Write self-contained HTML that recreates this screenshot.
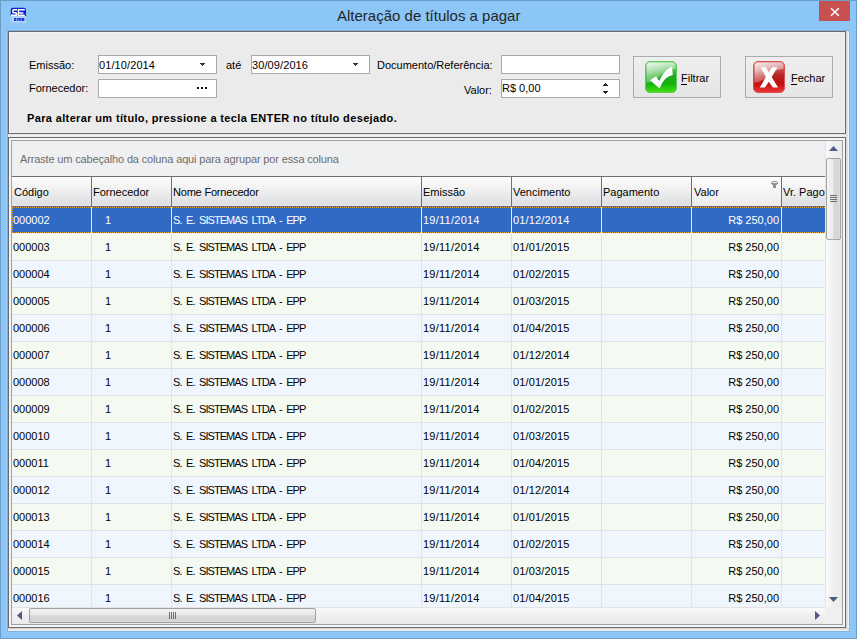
<!DOCTYPE html>
<html><head><meta charset="utf-8">
<style>
*{margin:0;padding:0;box-sizing:border-box}
html,body{width:857px;height:639px;overflow:hidden}
body{position:relative;background:#8cc6f7;font-family:"Liberation Sans",sans-serif;font-size:11px;color:#000}
.a{position:absolute}
.t{position:absolute;white-space:nowrap;line-height:13px}
#edge{left:0;top:0;width:857px;height:639px;border:1px solid #6c9dc6}
#close{left:819px;top:1px;width:31px;height:20px;background:#c75050}
#title{left:337px;top:7px;font-size:15px;line-height:18px;color:#262626}
#client{left:8px;top:31px;width:841px;height:600px;background:#ececec}
#rstrip{left:846px;top:31px;width:3px;height:600px;background:linear-gradient(90deg,#d9d9d9 0 1px,#e2e2e2 1px 2px,#f6f4f2 2px)}
#bstrip{left:8px;top:628px;width:841px;height:3px;background:linear-gradient(180deg,#d9d9d9 0 1px,#e2e2e2 1px 2px,#f6f4f2 2px)}
#panel{left:8px;top:31px;width:838px;height:103px;background:#ebebeb;border:1px solid #6a6a6a;}
#panel:after{content:"";position:absolute;left:0;top:0;right:0;bottom:0;border:1px solid #f1f1f1}
.box{position:absolute;background:#fff;border:1px solid #a9a9a9;height:19px}
.btn{position:absolute;width:88px;height:42px;border:1px solid #acacac;background:linear-gradient(180deg,#efefef,#e5e5e5)}
#gframe{left:8px;top:137px;width:838px;height:491px;border:1px solid #6a6a6a;background:#f6f6f6}
#gin{left:11px;top:140px;width:832px;height:485px;border:1px solid #a0a0a0;background:#f0f0f2}
#group{left:12px;top:141px;width:814px;height:36px;background:#eff0f2;border-bottom:1px solid #6f6f6f}
#hdr{left:12px;top:177px;width:814px;height:30px;background:linear-gradient(180deg,#fefefe 0%,#f1f1f2 40%,#dfe0e3 93%,#e8e8ea 96%,#e8e8ea 100%);border-bottom:1px solid #6a6a6a}
.hs{position:absolute;top:177px;width:1px;height:30px;background:#6f6f6f}
.row{position:absolute;left:12px;width:814px;height:27px;border-bottom:1px solid #e2e2e2}
.vs{position:absolute;width:1px;background:#e2e2e2}
.g{letter-spacing:-0.95px;word-spacing:2.4px}
.focus{background-image:linear-gradient(90deg,#e8a33a 50%,transparent 50%),linear-gradient(90deg,#e8a33a 50%,transparent 50%),linear-gradient(0deg,#e8a33a 50%,transparent 50%);background-size:2px 1px,2px 1px,1px 2px;background-position:0 0,0 100%,0 0;background-repeat:repeat-x,repeat-x,repeat-y}
</style></head><body>
<div class="a" id="edge"></div>
<div class="a" id="close"></div>
<div class="t" id="title">Alteração de títulos a pagar</div>
<div class="a" style="left:6px;top:29px;width:845px;height:604px;background:#8fc9fb"></div>
<div class="a" style="left:7px;top:30px;width:843px;height:602px;background:#7cb2e2"></div>
<div class="a" id="client"></div>
<div class="a" id="rstrip"></div>
<div class="a" id="bstrip"></div>
<div class="a" id="panel"></div>
<div class="t" style="left:29px;top:59px">Emissão:</div>
<div class="box" style="left:98px;top:55px;width:119px"></div>
<div class="t" style="left:99px;top:59px;letter-spacing:0.1px">01/10/2014</div>
<div class="t" style="left:226px;top:59px">até</div>
<div class="box" style="left:251px;top:55px;width:119px"></div>
<div class="t" style="left:252px;top:59px;letter-spacing:0.1px">30/09/2016</div>
<div class="t" style="left:377px;top:59px">Documento/Referência:</div>
<div class="box" style="left:501px;top:55px;width:119px"></div>
<div class="t" style="left:29px;top:82px">Fornecedor:</div>
<div class="box" style="left:98px;top:79px;width:119px"></div>
<div class="t" style="left:464px;top:84px">Valor:</div>
<div class="box" style="left:501px;top:79px;width:119px"></div>
<div class="t" style="left:502px;top:82px">R$ 0,00</div>
<div class="btn" style="left:633px;top:56px"></div>
<div class="t" style="left:681px;top:72px">Filtrar</div>
<div class="btn" style="left:745px;top:56px"></div>
<div class="t" style="left:791px;top:72px">Fechar</div>
<div class="t" style="left:27px;top:112px;font-weight:bold;letter-spacing:0.36px">Para alterar um título, pressione a tecla ENTER no título desejado.</div>

<div class="a" id="gframe"></div>
<div class="a" id="gin"></div>
<div class="a" id="group"></div>
<div class="t" style="left:20px;top:153px;color:#6d6d6d;letter-spacing:-0.15px">Arraste um cabeçalho da coluna aqui para agrupar por essa coluna</div>
<div class="a" id="hdr"></div>
<div class="a" style="left:692px;top:177px;width:89px;height:29px;background:linear-gradient(180deg,#fefefe 0%,#f6f6f6 45%,#ececed 90%,#efeff0 100%)"></div>
<div class="hs" style="left:91px"></div><div class="hs" style="left:171px"></div><div class="hs" style="left:421px"></div><div class="hs" style="left:511px"></div><div class="hs" style="left:601px"></div><div class="hs" style="left:691px"></div><div class="hs" style="left:781px"></div>
<div class="t" style="left:14px;top:186px">Código</div>
<div class="t" style="left:93px;top:186px">Fornecedor</div>
<div class="t" style="left:173px;top:186px;letter-spacing:-0.2px">Nome Fornecedor</div>
<div class="t" style="left:423px;top:186px">Emissão</div>
<div class="t" style="left:513px;top:186px">Vencimento</div>
<div class="t" style="left:603px;top:186px">Pagamento</div>
<div class="t" style="left:694px;top:186px">Valor</div>
<div class="t" style="left:783px;top:186px">Vr. Pago</div>
<div class="a" style="left:12px;top:207px;width:814px;height:26px;background:#316ac5"></div>
<div class="a" style="left:12px;top:233px;width:814px;height:1px;background:#eef2f6"></div>
<div class="a" style="left:91px;top:207px;width:1px;height:27px;background:#e4e8f0"></div>
<div class="a" style="left:171px;top:207px;width:1px;height:27px;background:#e4e8f0"></div>
<div class="a" style="left:421px;top:207px;width:1px;height:27px;background:#e4e8f0"></div>
<div class="a" style="left:511px;top:207px;width:1px;height:27px;background:#e4e8f0"></div>
<div class="a" style="left:601px;top:207px;width:1px;height:27px;background:#e4e8f0"></div>
<div class="a" style="left:691px;top:207px;width:1px;height:27px;background:#e4e8f0"></div>
<div class="a" style="left:781px;top:207px;width:1px;height:27px;background:#e4e8f0"></div>
<div class="t" style="left:13px;top:214px;color:#fff">000002</div>
<div class="t" style="left:105px;top:214px;color:#fff">1</div>
<div class="t g" style="left:173px;top:214px;color:#fff">S. E. SISTEMAS LTDA - EPP</div>
<div class="t" style="left:423px;top:214px;color:#fff;letter-spacing:0.25px">19/11/2014</div>
<div class="t" style="left:513px;top:214px;color:#fff;letter-spacing:0.15px">01/12/2014</div>
<div class="t" style="right:78px;top:214px;color:#fff">R$ 250,00</div>
<div class="a focus" style="left:12px;top:207px;width:814px;height:26px"></div>
<div class="a" style="left:12px;top:234px;width:814px;height:26px;background:#f4faf1"></div>
<div class="a" style="left:12px;top:260px;width:814px;height:1px;background:#e2e2e2"></div>
<div class="a" style="left:91px;top:234px;width:1px;height:27px;background:#e2e2e2"></div>
<div class="a" style="left:171px;top:234px;width:1px;height:27px;background:#e2e2e2"></div>
<div class="a" style="left:421px;top:234px;width:1px;height:27px;background:#e2e2e2"></div>
<div class="a" style="left:511px;top:234px;width:1px;height:27px;background:#e2e2e2"></div>
<div class="a" style="left:601px;top:234px;width:1px;height:27px;background:#e2e2e2"></div>
<div class="a" style="left:691px;top:234px;width:1px;height:27px;background:#e2e2e2"></div>
<div class="a" style="left:781px;top:234px;width:1px;height:27px;background:#e2e2e2"></div>
<div class="t" style="left:13px;top:241px;color:#000">000003</div>
<div class="t" style="left:105px;top:241px;color:#000">1</div>
<div class="t g" style="left:173px;top:241px;color:#000">S. E. SISTEMAS LTDA - EPP</div>
<div class="t" style="left:423px;top:241px;color:#000;letter-spacing:0.25px">19/11/2014</div>
<div class="t" style="left:513px;top:241px;color:#000;letter-spacing:0.15px">01/01/2015</div>
<div class="t" style="right:78px;top:241px;color:#000">R$ 250,00</div>
<div class="a" style="left:12px;top:261px;width:814px;height:26px;background:#f0f6fe"></div>
<div class="a" style="left:12px;top:287px;width:814px;height:1px;background:#e2e2e2"></div>
<div class="a" style="left:91px;top:261px;width:1px;height:27px;background:#e2e2e2"></div>
<div class="a" style="left:171px;top:261px;width:1px;height:27px;background:#e2e2e2"></div>
<div class="a" style="left:421px;top:261px;width:1px;height:27px;background:#e2e2e2"></div>
<div class="a" style="left:511px;top:261px;width:1px;height:27px;background:#e2e2e2"></div>
<div class="a" style="left:601px;top:261px;width:1px;height:27px;background:#e2e2e2"></div>
<div class="a" style="left:691px;top:261px;width:1px;height:27px;background:#e2e2e2"></div>
<div class="a" style="left:781px;top:261px;width:1px;height:27px;background:#e2e2e2"></div>
<div class="t" style="left:13px;top:268px;color:#000">000004</div>
<div class="t" style="left:105px;top:268px;color:#000">1</div>
<div class="t g" style="left:173px;top:268px;color:#000">S. E. SISTEMAS LTDA - EPP</div>
<div class="t" style="left:423px;top:268px;color:#000;letter-spacing:0.25px">19/11/2014</div>
<div class="t" style="left:513px;top:268px;color:#000;letter-spacing:0.15px">01/02/2015</div>
<div class="t" style="right:78px;top:268px;color:#000">R$ 250,00</div>
<div class="a" style="left:12px;top:288px;width:814px;height:26px;background:#f4faf1"></div>
<div class="a" style="left:12px;top:314px;width:814px;height:1px;background:#e2e2e2"></div>
<div class="a" style="left:91px;top:288px;width:1px;height:27px;background:#e2e2e2"></div>
<div class="a" style="left:171px;top:288px;width:1px;height:27px;background:#e2e2e2"></div>
<div class="a" style="left:421px;top:288px;width:1px;height:27px;background:#e2e2e2"></div>
<div class="a" style="left:511px;top:288px;width:1px;height:27px;background:#e2e2e2"></div>
<div class="a" style="left:601px;top:288px;width:1px;height:27px;background:#e2e2e2"></div>
<div class="a" style="left:691px;top:288px;width:1px;height:27px;background:#e2e2e2"></div>
<div class="a" style="left:781px;top:288px;width:1px;height:27px;background:#e2e2e2"></div>
<div class="t" style="left:13px;top:295px;color:#000">000005</div>
<div class="t" style="left:105px;top:295px;color:#000">1</div>
<div class="t g" style="left:173px;top:295px;color:#000">S. E. SISTEMAS LTDA - EPP</div>
<div class="t" style="left:423px;top:295px;color:#000;letter-spacing:0.25px">19/11/2014</div>
<div class="t" style="left:513px;top:295px;color:#000;letter-spacing:0.15px">01/03/2015</div>
<div class="t" style="right:78px;top:295px;color:#000">R$ 250,00</div>
<div class="a" style="left:12px;top:315px;width:814px;height:26px;background:#f0f6fe"></div>
<div class="a" style="left:12px;top:341px;width:814px;height:1px;background:#e2e2e2"></div>
<div class="a" style="left:91px;top:315px;width:1px;height:27px;background:#e2e2e2"></div>
<div class="a" style="left:171px;top:315px;width:1px;height:27px;background:#e2e2e2"></div>
<div class="a" style="left:421px;top:315px;width:1px;height:27px;background:#e2e2e2"></div>
<div class="a" style="left:511px;top:315px;width:1px;height:27px;background:#e2e2e2"></div>
<div class="a" style="left:601px;top:315px;width:1px;height:27px;background:#e2e2e2"></div>
<div class="a" style="left:691px;top:315px;width:1px;height:27px;background:#e2e2e2"></div>
<div class="a" style="left:781px;top:315px;width:1px;height:27px;background:#e2e2e2"></div>
<div class="t" style="left:13px;top:322px;color:#000">000006</div>
<div class="t" style="left:105px;top:322px;color:#000">1</div>
<div class="t g" style="left:173px;top:322px;color:#000">S. E. SISTEMAS LTDA - EPP</div>
<div class="t" style="left:423px;top:322px;color:#000;letter-spacing:0.25px">19/11/2014</div>
<div class="t" style="left:513px;top:322px;color:#000;letter-spacing:0.15px">01/04/2015</div>
<div class="t" style="right:78px;top:322px;color:#000">R$ 250,00</div>
<div class="a" style="left:12px;top:342px;width:814px;height:26px;background:#f4faf1"></div>
<div class="a" style="left:12px;top:368px;width:814px;height:1px;background:#e2e2e2"></div>
<div class="a" style="left:91px;top:342px;width:1px;height:27px;background:#e2e2e2"></div>
<div class="a" style="left:171px;top:342px;width:1px;height:27px;background:#e2e2e2"></div>
<div class="a" style="left:421px;top:342px;width:1px;height:27px;background:#e2e2e2"></div>
<div class="a" style="left:511px;top:342px;width:1px;height:27px;background:#e2e2e2"></div>
<div class="a" style="left:601px;top:342px;width:1px;height:27px;background:#e2e2e2"></div>
<div class="a" style="left:691px;top:342px;width:1px;height:27px;background:#e2e2e2"></div>
<div class="a" style="left:781px;top:342px;width:1px;height:27px;background:#e2e2e2"></div>
<div class="t" style="left:13px;top:349px;color:#000">000007</div>
<div class="t" style="left:105px;top:349px;color:#000">1</div>
<div class="t g" style="left:173px;top:349px;color:#000">S. E. SISTEMAS LTDA - EPP</div>
<div class="t" style="left:423px;top:349px;color:#000;letter-spacing:0.25px">19/11/2014</div>
<div class="t" style="left:513px;top:349px;color:#000;letter-spacing:0.15px">01/12/2014</div>
<div class="t" style="right:78px;top:349px;color:#000">R$ 250,00</div>
<div class="a" style="left:12px;top:369px;width:814px;height:26px;background:#f0f6fe"></div>
<div class="a" style="left:12px;top:395px;width:814px;height:1px;background:#e2e2e2"></div>
<div class="a" style="left:91px;top:369px;width:1px;height:27px;background:#e2e2e2"></div>
<div class="a" style="left:171px;top:369px;width:1px;height:27px;background:#e2e2e2"></div>
<div class="a" style="left:421px;top:369px;width:1px;height:27px;background:#e2e2e2"></div>
<div class="a" style="left:511px;top:369px;width:1px;height:27px;background:#e2e2e2"></div>
<div class="a" style="left:601px;top:369px;width:1px;height:27px;background:#e2e2e2"></div>
<div class="a" style="left:691px;top:369px;width:1px;height:27px;background:#e2e2e2"></div>
<div class="a" style="left:781px;top:369px;width:1px;height:27px;background:#e2e2e2"></div>
<div class="t" style="left:13px;top:376px;color:#000">000008</div>
<div class="t" style="left:105px;top:376px;color:#000">1</div>
<div class="t g" style="left:173px;top:376px;color:#000">S. E. SISTEMAS LTDA - EPP</div>
<div class="t" style="left:423px;top:376px;color:#000;letter-spacing:0.25px">19/11/2014</div>
<div class="t" style="left:513px;top:376px;color:#000;letter-spacing:0.15px">01/01/2015</div>
<div class="t" style="right:78px;top:376px;color:#000">R$ 250,00</div>
<div class="a" style="left:12px;top:396px;width:814px;height:26px;background:#f4faf1"></div>
<div class="a" style="left:12px;top:422px;width:814px;height:1px;background:#e2e2e2"></div>
<div class="a" style="left:91px;top:396px;width:1px;height:27px;background:#e2e2e2"></div>
<div class="a" style="left:171px;top:396px;width:1px;height:27px;background:#e2e2e2"></div>
<div class="a" style="left:421px;top:396px;width:1px;height:27px;background:#e2e2e2"></div>
<div class="a" style="left:511px;top:396px;width:1px;height:27px;background:#e2e2e2"></div>
<div class="a" style="left:601px;top:396px;width:1px;height:27px;background:#e2e2e2"></div>
<div class="a" style="left:691px;top:396px;width:1px;height:27px;background:#e2e2e2"></div>
<div class="a" style="left:781px;top:396px;width:1px;height:27px;background:#e2e2e2"></div>
<div class="t" style="left:13px;top:403px;color:#000">000009</div>
<div class="t" style="left:105px;top:403px;color:#000">1</div>
<div class="t g" style="left:173px;top:403px;color:#000">S. E. SISTEMAS LTDA - EPP</div>
<div class="t" style="left:423px;top:403px;color:#000;letter-spacing:0.25px">19/11/2014</div>
<div class="t" style="left:513px;top:403px;color:#000;letter-spacing:0.15px">01/02/2015</div>
<div class="t" style="right:78px;top:403px;color:#000">R$ 250,00</div>
<div class="a" style="left:12px;top:423px;width:814px;height:26px;background:#f0f6fe"></div>
<div class="a" style="left:12px;top:449px;width:814px;height:1px;background:#e2e2e2"></div>
<div class="a" style="left:91px;top:423px;width:1px;height:27px;background:#e2e2e2"></div>
<div class="a" style="left:171px;top:423px;width:1px;height:27px;background:#e2e2e2"></div>
<div class="a" style="left:421px;top:423px;width:1px;height:27px;background:#e2e2e2"></div>
<div class="a" style="left:511px;top:423px;width:1px;height:27px;background:#e2e2e2"></div>
<div class="a" style="left:601px;top:423px;width:1px;height:27px;background:#e2e2e2"></div>
<div class="a" style="left:691px;top:423px;width:1px;height:27px;background:#e2e2e2"></div>
<div class="a" style="left:781px;top:423px;width:1px;height:27px;background:#e2e2e2"></div>
<div class="t" style="left:13px;top:430px;color:#000">000010</div>
<div class="t" style="left:105px;top:430px;color:#000">1</div>
<div class="t g" style="left:173px;top:430px;color:#000">S. E. SISTEMAS LTDA - EPP</div>
<div class="t" style="left:423px;top:430px;color:#000;letter-spacing:0.25px">19/11/2014</div>
<div class="t" style="left:513px;top:430px;color:#000;letter-spacing:0.15px">01/03/2015</div>
<div class="t" style="right:78px;top:430px;color:#000">R$ 250,00</div>
<div class="a" style="left:12px;top:450px;width:814px;height:26px;background:#f4faf1"></div>
<div class="a" style="left:12px;top:476px;width:814px;height:1px;background:#e2e2e2"></div>
<div class="a" style="left:91px;top:450px;width:1px;height:27px;background:#e2e2e2"></div>
<div class="a" style="left:171px;top:450px;width:1px;height:27px;background:#e2e2e2"></div>
<div class="a" style="left:421px;top:450px;width:1px;height:27px;background:#e2e2e2"></div>
<div class="a" style="left:511px;top:450px;width:1px;height:27px;background:#e2e2e2"></div>
<div class="a" style="left:601px;top:450px;width:1px;height:27px;background:#e2e2e2"></div>
<div class="a" style="left:691px;top:450px;width:1px;height:27px;background:#e2e2e2"></div>
<div class="a" style="left:781px;top:450px;width:1px;height:27px;background:#e2e2e2"></div>
<div class="t" style="left:13px;top:457px;color:#000">000011</div>
<div class="t" style="left:105px;top:457px;color:#000">1</div>
<div class="t g" style="left:173px;top:457px;color:#000">S. E. SISTEMAS LTDA - EPP</div>
<div class="t" style="left:423px;top:457px;color:#000;letter-spacing:0.25px">19/11/2014</div>
<div class="t" style="left:513px;top:457px;color:#000;letter-spacing:0.15px">01/04/2015</div>
<div class="t" style="right:78px;top:457px;color:#000">R$ 250,00</div>
<div class="a" style="left:12px;top:477px;width:814px;height:26px;background:#f0f6fe"></div>
<div class="a" style="left:12px;top:503px;width:814px;height:1px;background:#e2e2e2"></div>
<div class="a" style="left:91px;top:477px;width:1px;height:27px;background:#e2e2e2"></div>
<div class="a" style="left:171px;top:477px;width:1px;height:27px;background:#e2e2e2"></div>
<div class="a" style="left:421px;top:477px;width:1px;height:27px;background:#e2e2e2"></div>
<div class="a" style="left:511px;top:477px;width:1px;height:27px;background:#e2e2e2"></div>
<div class="a" style="left:601px;top:477px;width:1px;height:27px;background:#e2e2e2"></div>
<div class="a" style="left:691px;top:477px;width:1px;height:27px;background:#e2e2e2"></div>
<div class="a" style="left:781px;top:477px;width:1px;height:27px;background:#e2e2e2"></div>
<div class="t" style="left:13px;top:484px;color:#000">000012</div>
<div class="t" style="left:105px;top:484px;color:#000">1</div>
<div class="t g" style="left:173px;top:484px;color:#000">S. E. SISTEMAS LTDA - EPP</div>
<div class="t" style="left:423px;top:484px;color:#000;letter-spacing:0.25px">19/11/2014</div>
<div class="t" style="left:513px;top:484px;color:#000;letter-spacing:0.15px">01/12/2014</div>
<div class="t" style="right:78px;top:484px;color:#000">R$ 250,00</div>
<div class="a" style="left:12px;top:504px;width:814px;height:26px;background:#f4faf1"></div>
<div class="a" style="left:12px;top:530px;width:814px;height:1px;background:#e2e2e2"></div>
<div class="a" style="left:91px;top:504px;width:1px;height:27px;background:#e2e2e2"></div>
<div class="a" style="left:171px;top:504px;width:1px;height:27px;background:#e2e2e2"></div>
<div class="a" style="left:421px;top:504px;width:1px;height:27px;background:#e2e2e2"></div>
<div class="a" style="left:511px;top:504px;width:1px;height:27px;background:#e2e2e2"></div>
<div class="a" style="left:601px;top:504px;width:1px;height:27px;background:#e2e2e2"></div>
<div class="a" style="left:691px;top:504px;width:1px;height:27px;background:#e2e2e2"></div>
<div class="a" style="left:781px;top:504px;width:1px;height:27px;background:#e2e2e2"></div>
<div class="t" style="left:13px;top:511px;color:#000">000013</div>
<div class="t" style="left:105px;top:511px;color:#000">1</div>
<div class="t g" style="left:173px;top:511px;color:#000">S. E. SISTEMAS LTDA - EPP</div>
<div class="t" style="left:423px;top:511px;color:#000;letter-spacing:0.25px">19/11/2014</div>
<div class="t" style="left:513px;top:511px;color:#000;letter-spacing:0.15px">01/01/2015</div>
<div class="t" style="right:78px;top:511px;color:#000">R$ 250,00</div>
<div class="a" style="left:12px;top:531px;width:814px;height:26px;background:#f0f6fe"></div>
<div class="a" style="left:12px;top:557px;width:814px;height:1px;background:#e2e2e2"></div>
<div class="a" style="left:91px;top:531px;width:1px;height:27px;background:#e2e2e2"></div>
<div class="a" style="left:171px;top:531px;width:1px;height:27px;background:#e2e2e2"></div>
<div class="a" style="left:421px;top:531px;width:1px;height:27px;background:#e2e2e2"></div>
<div class="a" style="left:511px;top:531px;width:1px;height:27px;background:#e2e2e2"></div>
<div class="a" style="left:601px;top:531px;width:1px;height:27px;background:#e2e2e2"></div>
<div class="a" style="left:691px;top:531px;width:1px;height:27px;background:#e2e2e2"></div>
<div class="a" style="left:781px;top:531px;width:1px;height:27px;background:#e2e2e2"></div>
<div class="t" style="left:13px;top:538px;color:#000">000014</div>
<div class="t" style="left:105px;top:538px;color:#000">1</div>
<div class="t g" style="left:173px;top:538px;color:#000">S. E. SISTEMAS LTDA - EPP</div>
<div class="t" style="left:423px;top:538px;color:#000;letter-spacing:0.25px">19/11/2014</div>
<div class="t" style="left:513px;top:538px;color:#000;letter-spacing:0.15px">01/02/2015</div>
<div class="t" style="right:78px;top:538px;color:#000">R$ 250,00</div>
<div class="a" style="left:12px;top:558px;width:814px;height:26px;background:#f4faf1"></div>
<div class="a" style="left:12px;top:584px;width:814px;height:1px;background:#e2e2e2"></div>
<div class="a" style="left:91px;top:558px;width:1px;height:27px;background:#e2e2e2"></div>
<div class="a" style="left:171px;top:558px;width:1px;height:27px;background:#e2e2e2"></div>
<div class="a" style="left:421px;top:558px;width:1px;height:27px;background:#e2e2e2"></div>
<div class="a" style="left:511px;top:558px;width:1px;height:27px;background:#e2e2e2"></div>
<div class="a" style="left:601px;top:558px;width:1px;height:27px;background:#e2e2e2"></div>
<div class="a" style="left:691px;top:558px;width:1px;height:27px;background:#e2e2e2"></div>
<div class="a" style="left:781px;top:558px;width:1px;height:27px;background:#e2e2e2"></div>
<div class="t" style="left:13px;top:565px;color:#000">000015</div>
<div class="t" style="left:105px;top:565px;color:#000">1</div>
<div class="t g" style="left:173px;top:565px;color:#000">S. E. SISTEMAS LTDA - EPP</div>
<div class="t" style="left:423px;top:565px;color:#000;letter-spacing:0.25px">19/11/2014</div>
<div class="t" style="left:513px;top:565px;color:#000;letter-spacing:0.15px">01/03/2015</div>
<div class="t" style="right:78px;top:565px;color:#000">R$ 250,00</div>
<div class="a" style="left:12px;top:585px;width:814px;height:26px;background:#f0f6fe"></div>
<div class="a" style="left:12px;top:611px;width:814px;height:1px;background:#e2e2e2"></div>
<div class="a" style="left:91px;top:585px;width:1px;height:27px;background:#e2e2e2"></div>
<div class="a" style="left:171px;top:585px;width:1px;height:27px;background:#e2e2e2"></div>
<div class="a" style="left:421px;top:585px;width:1px;height:27px;background:#e2e2e2"></div>
<div class="a" style="left:511px;top:585px;width:1px;height:27px;background:#e2e2e2"></div>
<div class="a" style="left:601px;top:585px;width:1px;height:27px;background:#e2e2e2"></div>
<div class="a" style="left:691px;top:585px;width:1px;height:27px;background:#e2e2e2"></div>
<div class="a" style="left:781px;top:585px;width:1px;height:27px;background:#e2e2e2"></div>
<div class="t" style="left:13px;top:592px;color:#000">000016</div>
<div class="t" style="left:105px;top:592px;color:#000">1</div>
<div class="t g" style="left:173px;top:592px;color:#000">S. E. SISTEMAS LTDA - EPP</div>
<div class="t" style="left:423px;top:592px;color:#000;letter-spacing:0.25px">19/11/2014</div>
<div class="t" style="left:513px;top:592px;color:#000;letter-spacing:0.15px">01/04/2015</div>
<div class="t" style="right:78px;top:592px;color:#000">R$ 250,00</div>

<!-- title icon -->
<svg class="a" style="left:0;top:0" width="30" height="30" viewBox="0 0 30 30">
<rect x="10.6" y="16.1" width="15.4" height="6.5" fill="#b3d2fb"/>
<path d="M10.7 16.1V10Q10.7 7.8 12.9 7.8H23.8Q26 7.8 26 10V16.1Z" fill="#0b1fcc"/>
<path d="M17.3 9.8H13.6Q12.9 9.8 12.9 10.6V12Q12.9 12.8 13.7 12.8H15.6Q16.3 12.8 16.3 13.5V15.2H11" fill="none" stroke="#fff" stroke-width="1.5"/>
<path d="M24.8 9.8H18.6L18.2 15.2H24.8M19 12.9H23.4" fill="none" stroke="#fff" stroke-width="1.5"/>
<path d="M14 18h2.2v.9H14.9v.4h1.3V21H14v-.9h1.3v-.4H14zM16.8 18h1v3h-1zM18.4 18h2.4v3h-1v-.9h-.4V21h-1zM21.4 18h2.2l.9.8v1.4l-.9.8h-2.2z" fill="#1c30dc"/>
</svg>
<!-- close X -->
<svg class="a" style="left:819px;top:1px" width="31" height="20" viewBox="0 0 31 20"><path d="M12 7.2L19.8 14.8M19.8 7.2L12 14.8" stroke="#fff" stroke-width="1.6"/></svg>
<!-- dropdown arrows -->
<svg class="a" style="left:200px;top:63px" width="5" height="3"><path d="M0 0h5v1H4v1H3v1H2V2H1V1H0z" fill="#333"/></svg>
<svg class="a" style="left:353px;top:63px" width="5" height="3"><path d="M0 0h5v1H4v1H3v1H2V2H1V1H0z" fill="#333"/></svg>
<!-- ellipsis -->
<div class="a" style="left:197px;top:87px;width:2px;height:2px;background:#111"></div>
<div class="a" style="left:201px;top:87px;width:2px;height:2px;background:#111"></div>
<div class="a" style="left:205px;top:87px;width:2px;height:2px;background:#111"></div>
<!-- spinner -->
<svg class="a" style="left:603px;top:83px" width="5" height="11"><path d="M2 0h1v1h1v1h1v1H0V2h1V1h1zM0 8h5v1H4v1H3v1H2v-1H1V9H0z" fill="#222"/></svg>
<!-- green check icon -->
<svg class="a" style="left:645px;top:61px" width="32" height="32" viewBox="0 0 32 32">
<defs>
<linearGradient id="gg" x1="0" y1="0" x2="0" y2="1"><stop offset="0" stop-color="#8fd88f"/><stop offset="0.45" stop-color="#22a822"/><stop offset="0.7" stop-color="#10b010"/><stop offset="1" stop-color="#44e010"/></linearGradient>
<linearGradient id="gh" x1="0" y1="0" x2="0.6" y2="1"><stop offset="0" stop-color="#ffffff" stop-opacity="0.85"/><stop offset="1" stop-color="#ffffff" stop-opacity="0.1"/></linearGradient>
<linearGradient id="rg" x1="0" y1="0" x2="0" y2="1"><stop offset="0" stop-color="#d88888"/><stop offset="0.45" stop-color="#b82222"/><stop offset="0.7" stop-color="#c01010"/><stop offset="1" stop-color="#ee3838"/></linearGradient>
</defs>
<rect x="0.5" y="0.5" width="31" height="31" rx="4.5" fill="url(#gg)" stroke="#5ccc5c"/>
<path d="M1.5 5Q1.5 1.5 5 1.5H27Q30.5 1.5 30.5 5V8Q22 8 15 15Q9 21 1.5 22Z" fill="url(#gh)"/>
<path d="M5 19.3L11 15.3L14.3 20.3Q16.5 11.5 27.1 5.2L27.7 14Q18.8 15.5 14.6 27.4Z" fill="#fff"/>
</svg>
<div class="a" style="left:681px;top:84px;width:6px;height:1px;background:#000"></div>
<!-- red X icon -->
<svg class="a" style="left:753px;top:61px" width="32" height="32" viewBox="0 0 32 32">
<defs>
<linearGradient id="rh" x1="0" y1="0" x2="0.6" y2="1"><stop offset="0" stop-color="#ffffff" stop-opacity="0.85"/><stop offset="1" stop-color="#ffffff" stop-opacity="0.1"/></linearGradient>
</defs>
<rect x="0.5" y="0.5" width="31" height="31" rx="4.5" fill="url(#rg)" stroke="#dd5050"/>
<path d="M1.5 5Q1.5 1.5 5 1.5H27Q30.5 1.5 30.5 5V8Q22 8 15 15Q9 21 1.5 22Z" fill="url(#rh)"/>
<path d="M4.7 5.25H9.8L12.8 10.3L16.1 5.25H21.4L15.75 15.1L22 25.5H16.9L12.8 19.8L8.9 25.5H3.8L9.8 15.1Z" fill="#fff" transform="translate(3,1)"/>
</svg>
<div class="a" style="left:791px;top:84px;width:6px;height:1px;background:#000"></div>
<!-- filter icon in Valor header -->
<svg class="a" style="left:771px;top:181px" width="7" height="7" viewBox="0 0 7 7"><path d="M1 0h5v1h1v2H6v1H5v3H2V4H1V3H0V1h1z" fill="#8a929f"/><path d="M1 1h5v1H1z" fill="#fafafa"/></svg>
<!-- vertical scrollbar -->
<div class="a" style="left:825px;top:141px;width:17px;height:466px;background:linear-gradient(90deg,#e4e4e4 0 1px,#fbfbfb 1px,#f1f1f1 40%,#eaeaea)"></div>
<svg class="a" style="left:829px;top:146px" width="9" height="5"><path d="M4.5 0L9 5H0Z" fill="#4e5b82"/></svg>
<div class="a" style="left:826px;top:158px;width:15px;height:82px;border:1px solid #a4a4a4;border-radius:2px;background:linear-gradient(90deg,#f5f5f5,#ebebeb 45%,#d9d9d9 52%,#d5d5d5 88%,#e2e2e2)"></div>
<div class="a" style="left:830px;top:195px;width:7px;height:1px;background:#6e6e6e;box-shadow:0 2px 0 #6e6e6e,0 4px 0 #6e6e6e,0 6px 0 #6e6e6e"></div>
<svg class="a" style="left:829px;top:597px" width="9" height="5"><path d="M0 0H9L4.5 5Z" fill="#4e5b82"/></svg>
<!-- horizontal scrollbar -->
<div class="a" style="left:12px;top:607px;width:813px;height:17px;background:linear-gradient(180deg,#e4e4e4 0 1px,#fbfbfb 1px,#f1f1f1 40%,#eaeaea)"></div>
<div class="a" style="left:825px;top:607px;width:17px;height:17px;background:#f0f0f2"></div>
<svg class="a" style="left:17px;top:611px" width="5" height="9"><path d="M5 0V9L0 4.5Z" fill="#4e5b82"/></svg>
<div class="a" style="left:29px;top:608px;width:287px;height:15px;border:1px solid #a0a0a0;border-radius:2px;background:linear-gradient(180deg,#f3f3f3,#e9e9e9 45%,#d7d7d7 52%,#d3d3d3 88%,#dedede)"></div>
<div class="a" style="left:169px;top:612px;width:1px;height:7px;background:#6e6e6e;box-shadow:2px 0 0 #6e6e6e,4px 0 0 #6e6e6e,6px 0 0 #6e6e6e"></div>
<svg class="a" style="left:815px;top:611px" width="5" height="9"><path d="M0 0V9L5 4.5Z" fill="#4e5b82"/></svg>
</body></html>
